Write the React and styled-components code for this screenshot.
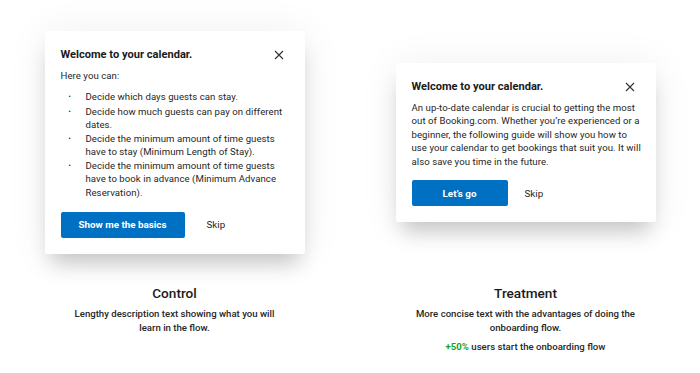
import React from 'react';
import styled, { createGlobalStyle } from 'styled-components';

const GlobalStyle = createGlobalStyle`
  html, body {
    margin: 0;
    padding: 0;
    background: #ffffff;
  }
  body {
    font-family: Roboto, "Liberation Sans", Arial, sans-serif;
    color: #262626;
    -webkit-font-smoothing: antialiased;
  }
`;

const Page = styled.div`
  width: 700px;
  height: 373px;
  padding-top: 32px;
  box-sizing: border-box;
  display: grid;
  grid-template-columns: 260px 260px;
  grid-template-rows: 221px auto;
  column-gap: 91px;
  row-gap: 31px;
  justify-content: center;
`;

const Card = styled.div`
  align-self: center;
  background: #ffffff;
  border-radius: 2px;
  padding: 16px 12px 16px 16px;
  box-shadow: 0 15px 20px -6px rgba(0, 0, 0, 0.2), 0 2px 40px rgba(0, 0, 0, 0.07);
`;

const Header = styled.div`
  display: flex;
  align-items: center;
  justify-content: space-between;
  height: 16px;
  margin-bottom: 6px;
`;

const Title = styled.h3`
  margin: 0;
  font-size: 11.1px;
  line-height: 16px;
  font-weight: 700;
  color: #1a1a1a;
`;

const Close = styled.button`
  border: none;
  background: none;
  padding: 0;
  margin-right: 9px;
  width: 10px;
  height: 10px;
  display: flex;
  align-items: center;
  justify-content: center;
  color: #333;
`;

const Text = styled.p`
  margin: 0;
  font-size: 9.6px;
  letter-spacing: 0.06px;
  line-height: 13.6px;
  color: #262626;
  white-space: ${p => (p.$lines ? 'nowrap' : 'normal')};
`;

const List = styled.ul`
  margin: 7px 0 0 0;
  padding: 0;
  list-style: none;
`;

const Item = styled.li`
  display: flex;
  font-size: 9.6px;
  letter-spacing: 0.06px;
  line-height: 13.6px;
  color: #262626;
  &::before {
    content: '•';
    flex: 0 0 25px;
    padding-left: 8px;
    box-sizing: border-box;
    font-size: 7px;
    line-height: 14.6px;
  }
`;

const Actions = styled.div`
  display: flex;
  align-items: center;
  margin-top: 12px;
  gap: ${p => p.$gap}px;
`;

const Primary = styled.button`
  width: ${p => p.$width}px;
  height: 26px;
  border: none;
  border-radius: 2px;
  background: #0071c2;
  color: #ffffff;
  font-family: inherit;
  font-size: 9.8px;
  font-weight: 700;
  padding: 0;
`;

const Secondary = styled.button`
  border: none;
  background: none;
  padding: 0;
  font-family: inherit;
  font-size: 9.8px;
  color: #262626;
`;

const Caption = styled.div`
  text-align: center;
`;

const CaptionTitle = styled.h2`
  margin: 0 0 5px 0;
  font-size: 13.6px;
  line-height: 18px;
  font-weight: 500;
  color: #1a1a1a;
`;

const CaptionText = styled.p`
  margin: 0 auto;
  max-width: ${p => p.$max}px;
  font-size: 9.6px;
  line-height: 14px;
  font-weight: 500;
  color: #262626;
`;

const Result = styled.p`
  margin: 5px 0 0 0;
  font-size: 9.6px;
  line-height: 14px;
  font-weight: 500;
  color: #262626;
  strong {
    color: #1aa31a;
    font-weight: 700;
  }
`;

const CloseIcon = () => (
  <svg width="10" height="10" viewBox="0 0 10 10">
    <path d="M1 1L9 9M9 1L1 9" stroke="currentColor" strokeWidth="1.1" fill="none" />
  </svg>
);

const Dialog = ({ children }) => (
  <Card>
    <Header>
      <Title>Welcome to your calendar.</Title>
      <Close><CloseIcon /></Close>
    </Header>
    {children}
  </Card>
);

export default function App() {
  return (
    <>
      <GlobalStyle />
      <Page>
        <Dialog>
          <Text>Here you can:</Text>
          <List>
            <Item>Decide which days guests can stay.</Item>
            <Item>Decide how much guests can pay on different dates.</Item>
            <Item>Decide the minimum amount of time guests have to stay (Minimum Length of Stay).</Item>
            <Item>Decide the minimum amount of time guests have to book in advance (Minimum Advance Reservation).</Item>
          </List>
          <Actions $gap={22}>
            <Primary $width={124}>Show me the basics</Primary>
            <Secondary>Skip</Secondary>
          </Actions>
        </Dialog>
        <Dialog>
          <Text $lines>
            An up-to-date calendar is crucial to getting the most<br />
            out of Booking.com. Whether you’re experienced or a<br />
            beginner, the following guide will show you how to<br />
            use your calendar to get bookings that suit you. It will<br />
            also save you time in the future.
          </Text>
          <Actions $gap={17}>
            <Primary $width={96}>Let’s go</Primary>
            <Secondary>Skip</Secondary>
          </Actions>
        </Dialog>
        <Caption>
          <CaptionTitle>Control</CaptionTitle>
          <CaptionText $max={210}>Lengthy description text showing what you will learn in the flow.</CaptionText>
        </Caption>
        <Caption>
          <CaptionTitle>Treatment</CaptionTitle>
          <CaptionText $max={230}>More concise text with the advantages of doing the onboarding flow.</CaptionText>
          <Result><strong>+50%</strong> users start the onboarding flow</Result>
        </Caption>
      </Page>
    </>
  );
}
